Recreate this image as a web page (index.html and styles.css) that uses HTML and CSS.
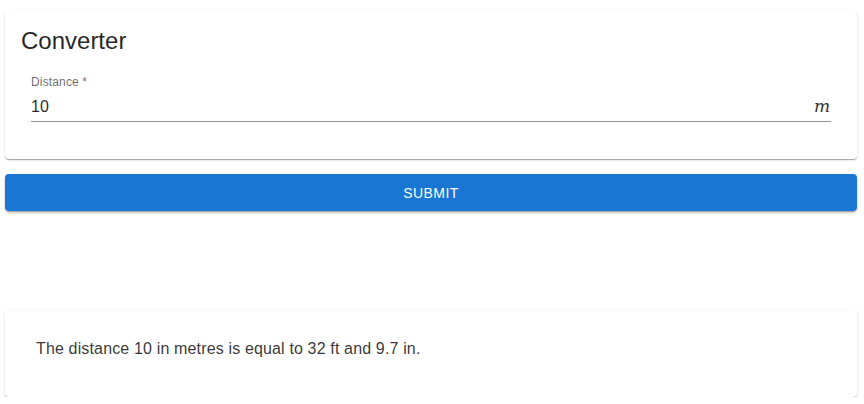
FILE: index.html
```html
<!DOCTYPE html>
<html lang="en">
<head>
<meta charset="utf-8">
<title>Converter</title>
<link rel="stylesheet" href="styles.css">
</head>
<body>
<div class="page">
  <section class="card form-card">
    <h1 class="title">Converter</h1>
    <div class="field">
      <label class="field-label" for="distance">Distance *</label>
      <div class="field-input">
        <input id="distance" class="input" type="text" value="10">
        <span class="unit">m</span>
      </div>
    </div>
  </section>
  <button class="submit" type="button">Submit</button>
  <section class="card result-card">
    <p class="result">The distance 10 in metres is equal to 32 ft and 9.7 in.</p>
  </section>
</div>
</body>
</html>
```
FILE: styles.css
```css
* { box-sizing: border-box; }
html, body { margin: 0; padding: 0; background: #fff; }
body { font-family: "Liberation Sans", Arial, sans-serif; color: rgba(0,0,0,0.87); }
.page {
  display: flex;
  flex-direction: column;
  padding: 10px 7px 0 5px;
}
.card {
  background: #fff;
  border-radius: 4px;
  box-shadow: 0px 2px 1px -1px rgba(0,0,0,0.2), 0px 1px 1px 0px rgba(0,0,0,0.14), 0px 1px 3px 0px rgba(0,0,0,0.12);
}
.form-card {
  padding: 15px 16px 0 16px;
  height: 149px;
}
.title {
  margin: 0;
  font-size: 24px;
  font-weight: 400;
  line-height: 32px;
  letter-spacing: 0;
}
.field {
  margin: 18px 10px 0 10px;
  display: flex;
  flex-direction: column;
}
.field-label {
  font-size: 12px;
  line-height: 14px;
  letter-spacing: 0.15px;
  color: rgba(0,0,0,0.6);
}
.field-input {
  margin-top: 6px;
  display: flex;
  align-items: flex-end;
  border-bottom: 1px solid rgba(0,0,0,0.42);
  padding-bottom: 3px;
}
.input {
  flex: 1;
  border: 0;
  outline: 0;
  padding: 0;
  margin: 0;
  font: 400 16px/23px "Liberation Sans", Arial, sans-serif;
  letter-spacing: 0.15px;
  color: rgba(0,0,0,0.87);
  background: transparent;
  min-width: 0;
}
.unit {
  font-family: "DejaVu Serif", "Liberation Serif", serif;
  font-style: italic;
  font-size: 17px;
  line-height: 23px;
  color: #333;
  margin-right: 1px;
}
.submit {
  margin-top: 15px;
  height: 37px;
  border: 0;
  border-radius: 4px;
  background: #1976d2;
  color: #fff;
  font: 400 14px/24px "Liberation Sans", Arial, sans-serif;
  letter-spacing: 0.4px;
  text-transform: uppercase;
  box-shadow: 0px 3px 1px -2px rgba(0,0,0,0.2), 0px 2px 2px 0px rgba(0,0,0,0.14), 0px 1px 5px 0px rgba(0,0,0,0.12);
  cursor: pointer;
}
.result-card {
  margin-top: 99px;
  padding: 27px 31px 36px 31px;
}
.result {
  margin: 0;
  font-size: 16px;
  line-height: 24px;
  letter-spacing: 0.15px;
  color: rgba(0,0,0,0.8);
}
```
